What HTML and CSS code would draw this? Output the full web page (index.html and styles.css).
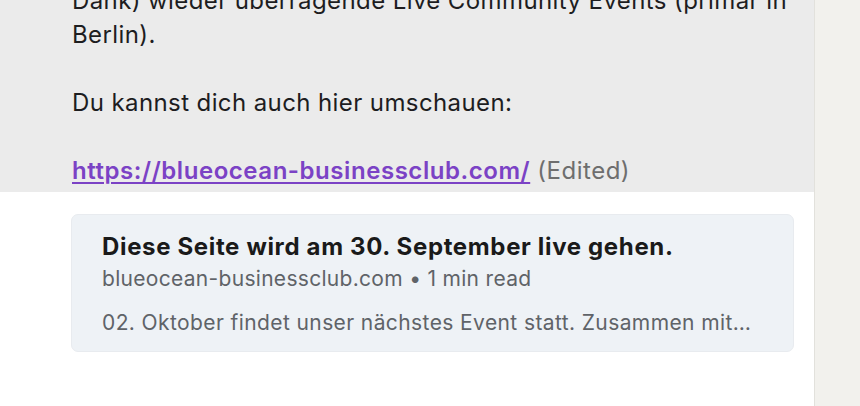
FILE: index.html
```html
<!DOCTYPE html>
<html lang="de">
<head>
<meta charset="utf-8">
<link rel="stylesheet" href="styles.css">
</head>
<body>
<div class="app">
  <div class="main">
    <div class="message">
      <p class="line">Dank) wieder überragende Live Community Events (primär in</p>
      <p class="line">Berlin).</p>
      <p class="line blank">&nbsp;</p>
      <p class="line">Du kannst dich auch hier umschauen:</p>
      <p class="line blank">&nbsp;</p>
      <p class="line"><a class="link" href="#">https://blueocean-businessclub.com/</a> <span class="edited">(Edited)</span></p>
    </div>
    <div class="preview">
      <div class="card">
        <div class="card-title">Diese Seite wird am 30. September live gehen.</div>
        <div class="card-meta">blueocean-businessclub.com • 1 min read</div>
        <div class="card-desc">02. Oktober findet unser nächstes Event statt. Zusammen mit…</div>
      </div>
    </div>
  </div>
  <div class="panel"></div>
</div>
</body>
</html>
```
FILE: styles.css
```css
html, body {
  margin: 0;
  padding: 0;
  height: 406px;
  overflow: hidden;
  background: #ffffff;
}
.app {
  display: flex;
  height: 406px;
  font-family: Inter, "Noto Sans", "Liberation Sans", sans-serif;
}
.main {
  width: 814px;
  flex: none;
  background: #ffffff;
  overflow: hidden;
}
.message {
  background: #ebebeb;
  padding: 0 20px 4px 72px;
  margin-top: -16px;
}
.line {
  margin: 0;
  font-size: 24px;
  line-height: 34px;
  letter-spacing: 0.4px;
  color: #1d1d1f;
  white-space: nowrap;
}
.link {
  color: #7b42c5;
  font-weight: 600;
  letter-spacing: 0.55px;
  text-decoration: underline;
  text-decoration-thickness: 2px;
  text-underline-offset: 3px;
}
.edited {
  color: #6e6e6e;
  letter-spacing: 0.5px;
}
.preview {
  padding: 22px 20px 0 71px;
}
.card {
  width: 661px;
  background: #eef2f6;
  border: 1px solid #e8ebef;
  border-radius: 7px;
  padding: 17px 30px 14px 30px;
}
.card-title {
  font-size: 24px;
  line-height: 30px;
  letter-spacing: 0.65px;
  font-weight: 650;
  color: #1a1a1a;
  white-space: nowrap;
}
.card-meta {
  font-size: 21px;
  line-height: 28px;
  letter-spacing: 0.3px;
  color: #5f6368;
  margin-top: 3px;
  white-space: nowrap;
}
.card-desc {
  font-size: 21px;
  line-height: 28px;
  letter-spacing: 0.4px;
  color: #5f6368;
  margin-top: 16px;
  white-space: nowrap;
  overflow: hidden;
  text-overflow: ellipsis;
}
.panel {
  flex: 1;
  background: #f2f1ed;
  border-left: 1px solid #e2e1dc;
}
```
